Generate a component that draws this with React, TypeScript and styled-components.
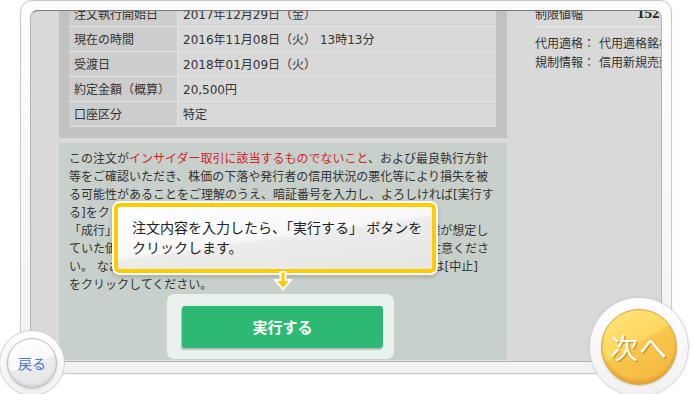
import React from 'react';
import styled, { createGlobalStyle } from 'styled-components';

const GlobalStyle = createGlobalStyle`
  html, body {
    margin: 0;
    padding: 0;
    background: #ffffff;
    overflow: hidden;
  }
  body {
    font-family: "DejaVu Sans", "Noto Sans CJK JP", sans-serif;
    color: #333333;
  }
`;

const Stage = styled.div`
  position: relative;
  width: 692px;
  height: 394px;
  overflow: hidden;
  box-sizing: border-box;
  padding-left: 20px;
`;

const Frame = styled.div`
  width: 652px;
  height: 374px;
  box-sizing: border-box;
  border: 1px solid #c9c9c9;
  border-radius: 12px;
  background: linear-gradient(#fdfdfd, #f2f2f2);
  padding: 9px 9px 11px;
  box-shadow: 0 0 2px rgba(0, 0, 0, 0.08);
`;

const Screen = styled.div`
  height: 100%;
  box-sizing: border-box;
  border: 1px solid #b4b4b4;
  border-top-color: #7a7a7a;
  border-radius: 8px 8px 0 0;
  background: #d9d9d9;
  overflow: hidden;
  display: flex;
  padding-left: 28px;
`;

const MainCol = styled.div`
  width: 448px;
  flex-shrink: 0;
  display: flex;
  flex-direction: column;
  margin-top: -10px;
`;

const TableWrap = styled.div`
  background: #c1c1c1;
  padding: 0 11px 11px 10px;
`;

const Table = styled.table`
  width: 100%;
  border-collapse: collapse;
  font-size: 12px;
  color: #333;
`;

const Row = styled.tr`
  height: 25px;
  border-bottom: 1px solid #e4e4e4;
`;

const Label = styled.td`
  width: 103px;
  padding: 0 0 0 5px;
  background: #cdcdcd;
  border-right: 1px solid #e4e4e4;
  white-space: nowrap;
`;

const Value = styled.td`
  padding: 0 0 0 5px;
  background: #d9d9d9;
  white-space: nowrap;
`;

const Notice = styled.div`
  flex: 1;
  margin-top: 5px;
  background: #c8d0cb;
  padding: 7px 10px 0;
  border-bottom: 1px solid #dde3df;
  display: flex;
  flex-direction: column;
`;

const NoticeText = styled.p`
  margin: 0;
  font-size: 12px;
  line-height: 18px;
  white-space: nowrap;
  color: #333;
`;

const Warn = styled.span`
  color: #d21f1f;
`;

const ButtonTray = styled.div`
  align-self: flex-start;
  margin-left: 98px;
  background: #e9f1ed;
  border-radius: 7px;
  padding: 12px 11px 11px 15px;
`;

const ExecButton = styled.div`
  width: 201px;
  height: 42px;
  border-radius: 3px;
  background: #2db873;
  box-shadow: -1px 2px 1px rgba(0, 0, 0, 0.22);
  color: #ffffff;
  font-size: 15px;
  font-weight: bold;
  display: flex;
  align-items: center;
  justify-content: center;
`;

const SideCol = styled.div`
  width: 200px;
  flex-shrink: 0;
  margin-left: 28px;
  margin-top: -10px;
  font-size: 12px;
  color: #333;
`;

const LimitRow = styled.div`
  height: 25px;
  border-bottom: 1px solid #e6e6e6;
  display: flex;
  align-items: center;
`;

const LimitLabel = styled.span`
  width: 102px;
`;

const LimitValue = styled.span`
  font-family: "Liberation Serif", serif;
  font-weight: bold;
  font-size: 15px;
  color: #222;
`;

const InfoList = styled.div`
  margin-top: 8px;
  line-height: 19px;
  white-space: nowrap;
`;

const InfoKey = styled.span`
  margin-right: 4px;
`;

const Tooltip = styled.div`
  position: absolute;
  left: 114px;
  top: 203px;
  width: 322px;
  height: 70px;
  box-sizing: border-box;
  border: 4px solid #ffcc00;
  border-radius: 6px;
  box-shadow: 0 0 0 2px #ffffff, 0 2px 5px 2px rgba(0, 0, 0, 0.18);
  background: linear-gradient(172deg, #ffffff 0%, #f8f8f8 48%, #ececec 52%, #e6e6e6 100%);
  padding: 10px 0 0 14px;
  font-family: "Noto Sans CJK JP", sans-serif;
  font-size: 14px;
  line-height: 20px;
  color: #222;
  white-space: nowrap;
`;

const TipArrow = styled.svg`
  position: absolute;
  left: 272px;
  top: 271px;
`;

const NextRing = styled.div`
  position: absolute;
  left: 589px;
  top: 297px;
  width: 100px;
  height: 100px;
  box-sizing: border-box;
  border-radius: 50%;
  border: 1px solid #d6d6d6;
  background: linear-gradient(#ffffff, #f1f1f1);
  box-shadow: 0 0 3px rgba(0, 0, 0, 0.1);
  display: flex;
  align-items: center;
  justify-content: center;
`;

const NextButton = styled.div`
  width: 76px;
  height: 76px;
  box-sizing: border-box;
  border-radius: 50%;
  border: 1px solid #d9a23c;
  background: linear-gradient(150deg, #ffe57c 0%, #fed75e 46%, #f9c74d 47%, #f2b43e 100%);
  box-shadow: inset 0 -3px 3px rgba(190, 120, 20, 0.35), 0 1px 2px rgba(0, 0, 0, 0.15);
  color: #ffffff;
  font-family: "Noto Sans CJK JP", sans-serif;
  font-size: 28px;
  text-shadow: 1px 1px 1px rgba(170, 110, 20, 0.8);
  display: flex;
  align-items: center;
  justify-content: center;
  letter-spacing: 1px;
`;

const BackRing = styled.div`
  position: absolute;
  left: -1px;
  top: 330px;
  width: 66px;
  height: 66px;
  box-sizing: border-box;
  border-radius: 50%;
  border: 1px solid #d0d0d0;
  background: linear-gradient(#ffffff, #f0f0f0);
  display: flex;
  align-items: center;
  justify-content: center;
`;

const BackButton = styled.div`
  width: 50px;
  height: 50px;
  box-sizing: border-box;
  border-radius: 50%;
  border: 1px solid #bdbdbd;
  background: linear-gradient(160deg, #ffffff 0%, #fafafa 50%, #ececec 52%, #e4e4e4 100%);
  box-shadow: inset 0 -2px 3px rgba(0, 0, 0, 0.08), 0 1px 2px rgba(0, 0, 0, 0.2);
  color: #4d74c8;
  font-family: "Noto Sans CJK JP", sans-serif;
  font-size: 14px;
  display: flex;
  align-items: center;
  justify-content: center;
`;

const rows: [string, string][] = [
  ['注文執行開始日', '2017年12月29日（金）'],
  ['現在の時間', '2016年11月08日（火） 13時13分'],
  ['受渡日', '2018年01月09日（火）'],
  ['約定金額（概算）', '20,500円'],
  ['口座区分', '特定'],
];

export default function App() {
  return (
    <>
      <GlobalStyle />
      <Stage>
        <Frame>
          <Screen>
            <MainCol>
              <TableWrap>
                <Table>
                  <tbody>
                    {rows.map(([k, v]) => (
                      <Row key={k}>
                        <Label>{k}</Label>
                        <Value>{v}</Value>
                      </Row>
                    ))}
                  </tbody>
                </Table>
              </TableWrap>
              <Notice>
                <NoticeText>
                  この注文が<Warn>インサイダー取引に該当するものでないこと</Warn>、および最良執行方針
                  <br />
                  等をご確認いただき、株価の下落や発行者の信用状況の悪化等により損失を被
                  <br />
                  る可能性があることをご理解のうえ、暗証番号を入力し、よろしければ[実行す
                  <br />
                  る]をクリックしてください。
                  <br />
                  「成行」注文の場合、相場の急激な変動や流動性などにより、お客様が想定し
                  <br />
                  ていた価格と大きく異なる価格で約定する可能性がありますのでご注意くださ
                  <br />
                  い。 なお、注文内容を変更される場合や、注文を取り消される場合は[中止]
                  <br />
                  をクリックしてください。
                </NoticeText>
                <ButtonTray>
                  <ExecButton>実行する</ExecButton>
                </ButtonTray>
              </Notice>
            </MainCol>
            <SideCol>
              <LimitRow>
                <LimitLabel>制限値幅</LimitLabel>
                <LimitValue>152～</LimitValue>
              </LimitRow>
              <InfoList>
                <div>
                  <InfoKey>代用適格：</InfoKey>代用適格銘柄
                </div>
                <div>
                  <InfoKey>規制情報：</InfoKey>信用新規売建停止
                </div>
              </InfoList>
            </SideCol>
          </Screen>
        </Frame>

        <Tooltip>
          注文内容を入力したら、「実行する」 ボタンを
          <br />
          クリックします。
        </Tooltip>
        <TipArrow width="22" height="21" viewBox="0 0 22 21">
          <path
            d="M8.5 0.5 H13.5 V9 H19 L11 18.5 L3 9 H8.5 Z"
            fill="#ffcc00"
            stroke="#ffffff"
            strokeWidth="2"
            strokeLinejoin="miter"
          />
        </TipArrow>

        <BackRing>
          <BackButton>戻る</BackButton>
        </BackRing>
        <NextRing>
          <NextButton>次へ</NextButton>
        </NextRing>
      </Stage>
    </>
  );
}
